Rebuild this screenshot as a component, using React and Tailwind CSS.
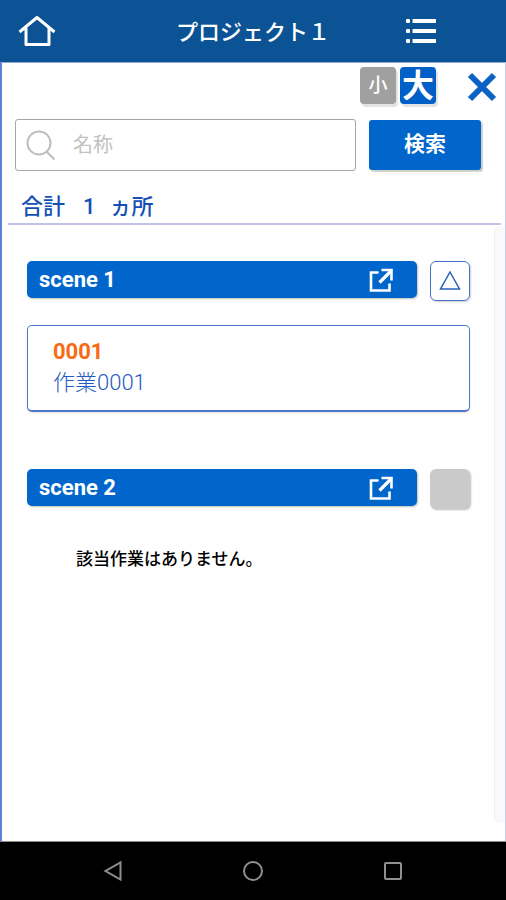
import { useState } from 'react'

const SCENES = [
  { id: 1, name: 'scene 1', works: [{ code: '0001', title: '作業0001' }] },
  { id: 2, name: 'scene 2', works: [] },
]

function HomeIcon() {
  return (
    <svg width="38" height="32" viewBox="0 0 38 32" fill="none" stroke="currentColor" strokeWidth="3" aria-hidden="true">
      <path d="M1.5 17 19 2.5l17.5 14.5" strokeLinejoin="round" />
      <path d="M8 13v16.5h23V13" strokeLinejoin="round" />
    </svg>
  )
}

function ListIcon() {
  return (
    <svg width="30" height="26" viewBox="0 0 30 26" fill="currentColor" aria-hidden="true">
      {[1, 11, 21].map((y) => (
        <g key={y}>
          <rect x="0" y={y} width="4" height="4" rx="1" />
          <rect x="6.5" y={y} width="23.5" height="4" rx="0.5" />
        </g>
      ))}
    </svg>
  )
}

function CloseIcon() {
  return (
    <svg width="30" height="30" viewBox="0 0 30 30" fill="none" stroke="currentColor" strokeWidth="6" aria-hidden="true">
      <path d="M3 3l24 24M27 3L3 27" />
    </svg>
  )
}

function SearchIcon() {
  return (
    <svg width="30" height="32" viewBox="0 0 30 32" fill="none" stroke="currentColor" strokeWidth="2" aria-hidden="true">
      <circle cx="13" cy="14" r="11.5" />
      <path d="M20.5 22.5l8 8" />
    </svg>
  )
}

function OpenIcon() {
  return (
    <svg width="24" height="24" viewBox="0 0 24 24" fill="none" stroke="currentColor" strokeWidth="2.6" aria-hidden="true">
      <path d="M9.5 4.5H2v18h18.500V15.5" />
      <path d="M12.5 2h10v10.500" />
      <path d="M10.5 14.500L21.500 3.500" strokeWidth="3.2" />
    </svg>
  )
}

function Header() {
  return (
    <header className="grid h-[62px] grid-cols-[1fr_auto_1fr] items-center bg-[#0b5394] text-white">
      <div className="pl-[18px]">
        <button type="button" aria-label="ホーム" className="block">
          <HomeIcon />
        </button>
      </div>
      <h1 className="pt-1 text-[22px] leading-8 font-medium">プロジェクト１</h1>
      <div className="flex justify-end pr-[70px]">
        <button type="button" aria-label="メニュー">
          <ListIcon />
        </button>
      </div>
    </header>
  )
}

function Scene({ scene }) {
  const [open, setOpen] = useState(true)
  const hasWorks = scene.works.length > 0

  return (
    <section>
      <div className="flex h-10 items-start gap-[13px]">
        <button
          type="button"
          className="flex h-[37px] flex-1 items-center justify-between rounded-[5px] bg-[#0066cc] pt-px pr-6 pl-3 text-white shadow-[1px_1px_2px_#00000040]"
        >
          <span className="text-[22px] leading-7 font-bold">{scene.name}</span>
          <OpenIcon />
        </button>
        {hasWorks ? (
          <button
            type="button"
            aria-label="開閉"
            onClick={() => setOpen(!open)}
            className="flex size-10 items-center justify-center rounded-md border border-[#4472c4] text-[#2b62b8] shadow-[1px_1px_2px_#00000030]"
          >
            <svg width="22" height="20" viewBox="0 0 22 20" fill="none" stroke="currentColor" strokeWidth="1.5" aria-hidden="true">
              <path d={open ? 'M11 1L20.5 18H1.5z' : 'M11 19L20.5 2H1.5z'} />
            </svg>
          </button>
        ) : (
          <button type="button" disabled aria-label="開閉" className="size-10 rounded-md bg-[#cacaca] shadow-[1px_1px_2px_#00000040]" />
        )}
      </div>

      {/* 作業一覧 */}
      {!hasWorks && (
        <p className="mt-9 pl-[49px] text-[17px] leading-7 font-medium text-black">該当作業はありません。</p>
      )}
      {hasWorks && open && scene.works.map((w) => (
        <a
          key={w.code}
          href={'#' + w.code}
          className="mt-6 block rounded-[5px] border border-b-2 border-[#4f78c8] px-[25px] pt-[10px] pb-3 shadow-[0_1px_2px_#00000020]"
        >
          <span className="block text-[22px] leading-[31px] font-bold text-[#f96a14]">{w.code}</span>
          <span className="block text-[22px] leading-[31px] font-light text-[#1f5bbf]">{w.title}</span>
        </a>
      ))}
    </section>
  )
}

function App() {
  const [size, setSize] = useState('大')
  const [keyword, setKeyword] = useState('')

  return (
    <div className="flex min-h-screen flex-col bg-white font-[Roboto,'Noto_Sans_CJK_JP',sans-serif]">
      <Header />

      <main className="flex flex-1 flex-col border-t border-r border-l-2 border-t-[#8fa8d8] border-r-[#c9cdf0] border-l-[#5f80d6]">
        {/* 文字サイズ切替 */}
        <div className="flex h-[46px] items-start justify-end pt-1 pr-2">
          <div className="flex gap-1">
            <button
              type="button"
              onClick={() => setSize('小')}
              aria-pressed={size === '小'}
              className="flex h-[37px] w-9 items-center justify-center rounded bg-[#a0a0a0] text-[19px] leading-7 font-medium text-white shadow-[2px_3px_1px_#0000001c]"
            >
              小
            </button>
            <button
              type="button"
              onClick={() => setSize('大')}
              aria-pressed={size === '大'}
              className="flex h-[37px] w-9 items-center justify-center rounded bg-[#0060c8] text-[32px] leading-9 font-bold text-white shadow-[2px_3px_1px_#0000001c]"
            >
              大
            </button>
          </div>
          <button type="button" aria-label="閉じる" className="mt-[5px] ml-[31px] text-[#0b62c4]">
            <CloseIcon />
          </button>
        </div>

        {/* 検索 */}
        <form className="mt-[10px] flex items-center gap-[13px] pr-6 pl-[13px]" onSubmit={(e) => e.preventDefault()}>
          <label className="flex h-[52px] min-w-0 flex-1 items-center rounded-[3px] border border-[#a6a6a6] pl-[10px] text-[#bdbdbd]">
            <SearchIcon />
            <input
              type="text"
              aria-label="名称"
              placeholder="名称"
              value={keyword}
              onChange={(e) => setKeyword(e.target.value)}
              className="ml-[17px] min-w-0 flex-1 text-[20px] leading-8 text-gray-800 outline-none placeholder:text-[#c2c2c2]"
            />
          </label>
          <button
            type="submit"
            className="h-[50px] w-28 rounded-[3px] bg-[#0066cc] text-[21px] font-bold text-white shadow-[2px_2px_1px_#00000030]"
          >
            検索
          </button>
        </form>

        <p className="mt-5 mr-1 ml-[6px] flex gap-[18px] border-b-2 border-[#c0c4e8] pl-[13px] text-[22px] leading-8 font-medium text-[#1450b4]">
          <span>合計</span>
          <span>1</span>
          <span className="-ml-1">ヵ所</span>
        </p>

        <div className="flex flex-1 pt-px pb-[18px]">
          <div className="flex flex-1 flex-col gap-[57px] pt-[35px] pr-6 pl-[25px]">
            {SCENES.map((s) => (
              <Scene key={s.id} scene={s} />
            ))}
          </div>
          <div className="w-[11px] rounded-md border-l border-[#f0f0f0] bg-[#f9f9f9]" />
        </div>
      </main>

      <nav className="flex h-[59px] items-center justify-center gap-[116px] border-t border-[#8a8a8a] bg-black text-[#8f8f8f]">
        <button type="button" aria-label="戻る">
          <svg width="24" height="24" viewBox="0 0 24 24" fill="none" stroke="currentColor" strokeWidth="2" aria-hidden="true">
            <path d="M19.5 3.5v17L4.5 12z" />
          </svg>
        </button>
        <button type="button" aria-label="ホーム画面">
          <svg width="24" height="24" viewBox="0 0 24 24" fill="none" stroke="currentColor" strokeWidth="2" aria-hidden="true">
            <circle cx="12" cy="12" r="9" />
          </svg>
        </button>
        <button type="button" aria-label="履歴">
          <svg width="24" height="24" viewBox="0 0 24 24" fill="none" stroke="currentColor" strokeWidth="2" aria-hidden="true">
            <rect x="4" y="4" width="16" height="16" rx="1" />
          </svg>
        </button>
      </nav>
    </div>
  )
}

export default App
